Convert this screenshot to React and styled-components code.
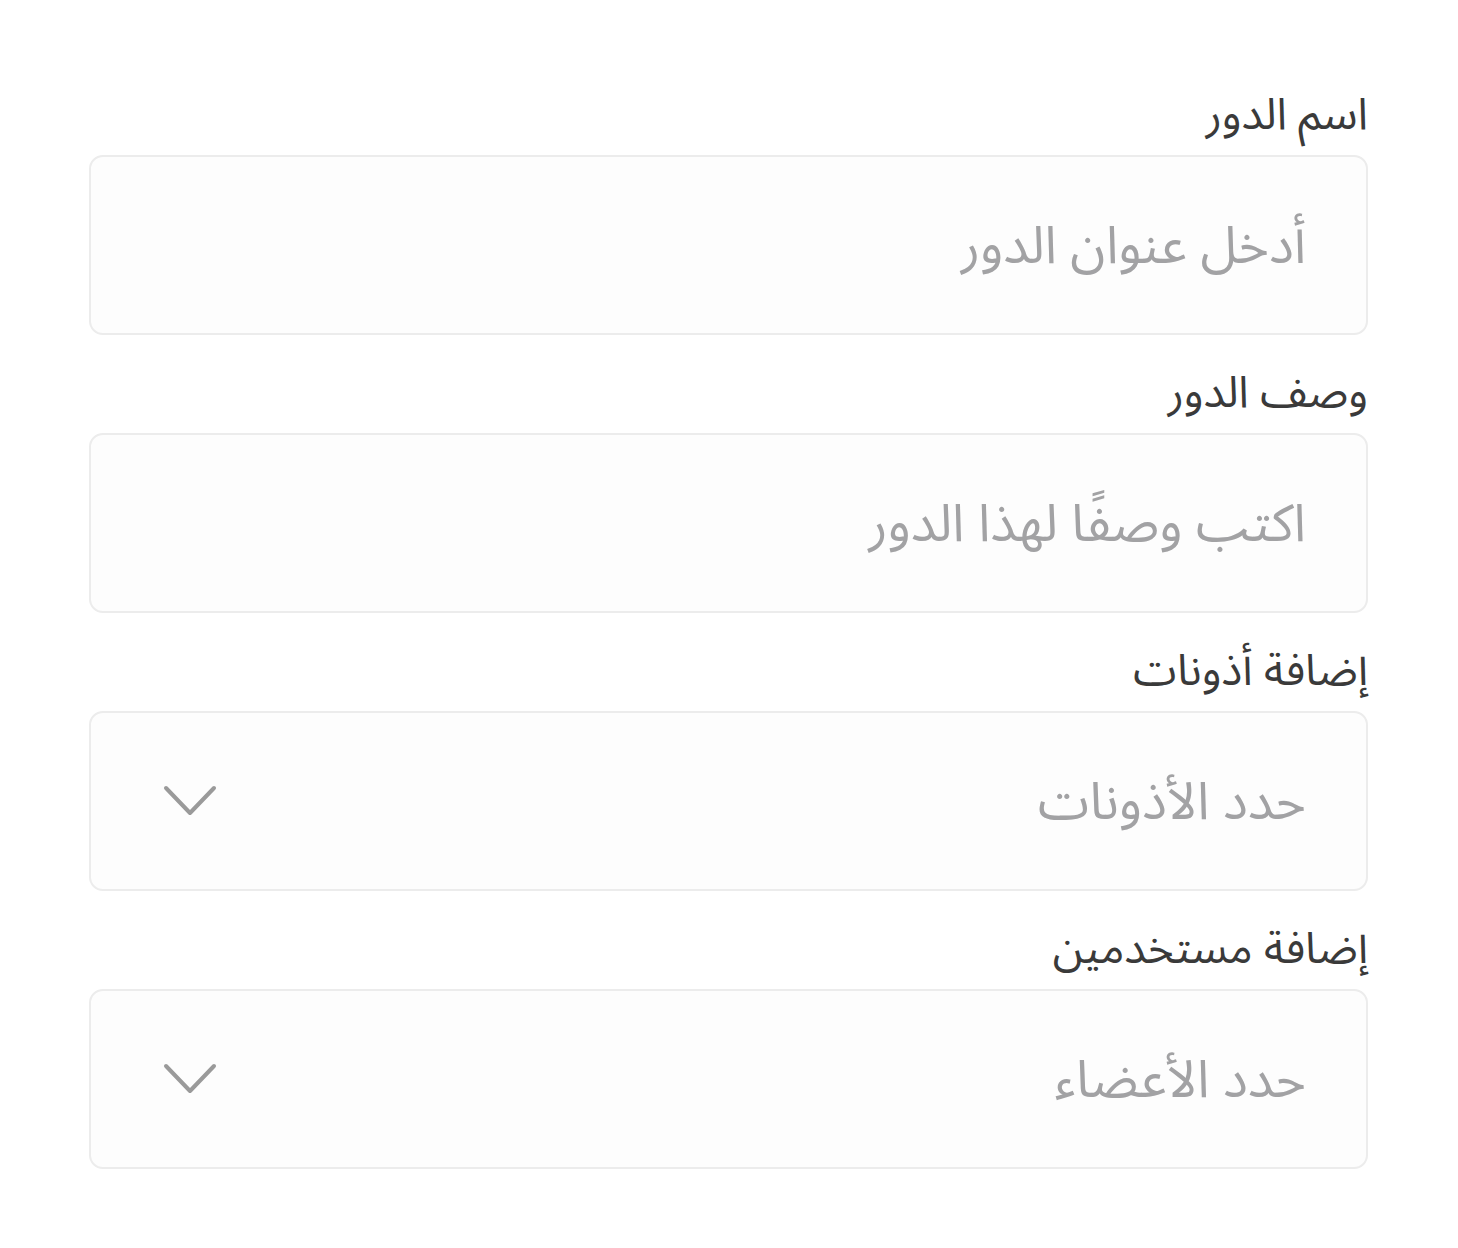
import React from 'react';
import styled, { createGlobalStyle } from 'styled-components';

const GlobalStyle = createGlobalStyle`
  body {
    margin: 0;
    background: #ffffff;
    font-family: "Noto Sans Arabic", "Noto Sans", "DejaVu Sans", sans-serif;
  }
`;

const Form = styled.form`
  direction: rtl;
  display: flex;
  flex-direction: column;
  gap: 32px;
  padding: 89px 90px 0 89px;
`;

const Field = styled.div`
  display: flex;
  flex-direction: column;
  gap: 13px;
`;

const Label = styled.label`
  font-size: 44px;
  line-height: 53px;
  color: #3a3a3a;
`;

const Box = styled.div`
  display: flex;
  align-items: center;
  justify-content: space-between;
  height: 180px;
  box-sizing: border-box;
  padding: 0 60px 0 72px;
  border: 2px solid #ececec;
  border-radius: 14px;
  background: #fdfdfd;
`;

const Input = styled.input`
  flex: 1;
  border: none;
  outline: none;
  background: transparent;
  font-family: inherit;
  font-size: 52px;
  color: #333;
  direction: rtl;
  padding: 0;
  margin-top: 3px;

  &::placeholder {
    color: #a2a2a4;
  }
`;

const Placeholder = styled.span`
  font-size: 52px;
  color: #a2a2a4;
  margin-top: 3px;
`;

const Chevron = () => (
  <svg width="54" height="32" viewBox="0 0 54 32" fill="none">
    <path d="M3 3 L27 28 L51 3" stroke="#9a9a9a" strokeWidth="4" strokeLinecap="round" strokeLinejoin="round" />
  </svg>
);

const TextField = ({ id, label, placeholder }) => (
  <Field>
    <Label htmlFor={id}>{label}</Label>
    <Box>
      <Input id={id} placeholder={placeholder} />
    </Box>
  </Field>
);

const SelectField = ({ id, label, placeholder }) => (
  <Field>
    <Label htmlFor={id}>{label}</Label>
    <Box id={id}>
      <Placeholder>{placeholder}</Placeholder>
      <Chevron />
    </Box>
  </Field>
);

const App = () => (
  <>
    <GlobalStyle />
    <Form>
      <TextField id="role-name" label="اسم الدور" placeholder="أدخل عنوان الدور" />
      <TextField id="role-desc" label="وصف الدور" placeholder="اكتب وصفًا لهذا الدور" />
      <SelectField id="perms" label="إضافة أذونات" placeholder="حدد الأذونات" />
      <SelectField id="users" label="إضافة مستخدمين" placeholder="حدد الأعضاء" />
    </Form>
  </>
);

export default App;
